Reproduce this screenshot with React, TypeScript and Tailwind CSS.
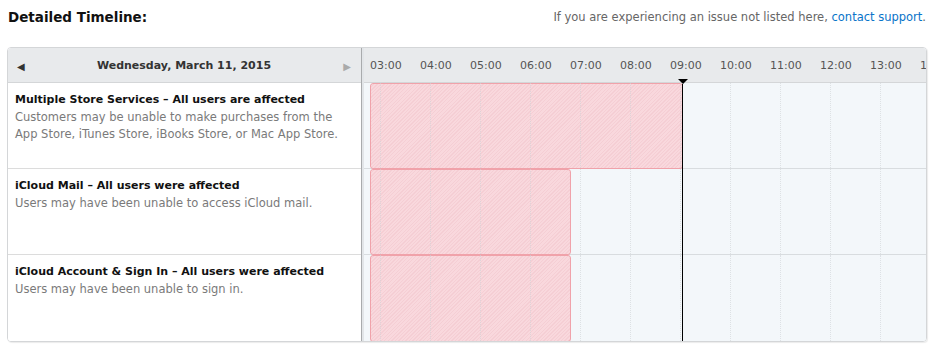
import React from "react";

const hours = ["03:00","04:00","05:00","06:00","07:00","08:00","09:00","10:00","11:00","12:00","13:00","14:00"];

const rows = [
  {
    title: "Multiple Store Services \u2013 All users are affected",
    desc: ["Customers may be unable to make purchases from the", "App Store, iTunes Store, iBooks Store, or Mac App Store."],
    start: 6,
    end: 318,
  },
  {
    title: "iCloud Mail \u2013 All users were affected",
    desc: ["Users may have been unable to access iCloud mail."],
    start: 6,
    end: 206,
  },
  {
    title: "iCloud Account & Sign In \u2013 All users were affected",
    desc: ["Users may have been unable to sign in."],
    start: 6,
    end: 206,
  },
];

const NOW = 318; // px offset inside timeline area

export default function App() {
  return (
    <div className="w-[937px] h-[352px] bg-white overflow-hidden font-['DejaVu_Sans',sans-serif]">
      <div className="flex items-end justify-between pl-[8px] pr-[11px] h-[26px]">
        <div className="text-[13.5px] font-bold text-[#111] leading-[18px]">Detailed Timeline:</div>
        <div className="text-[11.5px] text-[#666] leading-[16px] mb-[1px]">
          If you are experiencing an issue not listed here, <span className="text-[#0a74c9]">contact support</span>.
        </div>
      </div>
      <div className="ml-[7px] mt-[21px] w-[920px] h-[295px] border border-[#d4d6d8] rounded-[4px] flex overflow-hidden shadow-[1px_1px_1px_rgba(0,0,0,0.08)]">
        {/* left column */}
        <div className="w-[354px] shrink-0 flex flex-col border-r border-[#a9abad] bg-white">
          <div className="h-[35px] bg-[#e8eaec] flex items-center justify-between pl-[9px] pr-[10px] pt-[2px] border-b border-[#d4d6d8]">
            <span className="text-[10px] text-[#333]">◀</span>
            <span className="text-[11px] font-bold text-[#333] whitespace-nowrap">Wednesday, March 11, 2015</span>
            <span className="text-[10px] text-[#aaa]">▶</span>
          </div>
          {rows.map((r, i) => (
            <div key={i} className={"h-[86px] px-[7px] pt-[8px] whitespace-nowrap " + (i < 2 ? "border-b border-[#dcdcdc]" : "")}>
              <div className="text-[11px] font-bold text-[#111] leading-[17px]">{r.title}</div>
              <div className="mt-[1px]">
                {r.desc.map((d, j) => (
                  <div key={j} className="text-[11.5px] text-[#7a7a7a] leading-[17px]">{d}</div>
                ))}
              </div>
            </div>
          ))}
        </div>
        {/* timeline */}
        <div className="flex-1 min-w-0 relative flex flex-col bg-[#f3f7fa] border-l-2 border-[#e2e5e8] overflow-hidden">
          <div className="h-[35px] shrink-0 bg-[#e8eaec] border-b border-[#d4d6d8] flex items-center pl-[6px] pt-[3px] whitespace-nowrap">
            {hours.map((h) => (
              <span key={h} className="w-[50px] shrink-0 text-[11px] text-[#555]">{h}</span>
            ))}
          </div>
          {rows.map((r, i) => (
            <div key={i} className={"h-[86px] shrink-0 relative " + (i < 2 ? "border-b border-[#d8dcdf]" : "")}>
              <div
                className="absolute top-0 bottom-[-1px] border border-[#f0a2aa] rounded-[3px] bg-[repeating-linear-gradient(135deg,#f9d8dd_0px,#f9d8dd_1.5px,#f5ced4_1.5px,#f5ced4_2.5px)]"
                style={{ left: r.start, width: r.end - r.start + 1 }}
              />
              {hours.map((h, k) => (
                <div
                  key={h}
                  className="absolute top-0 bottom-0 w-0 border-l border-dotted border-[#cfd3d7] opacity-60"
                  style={{ left: 16 + k * 50 }}
                />
              ))}
            </div>
          ))}
          {/* now line */}
          <div className="absolute top-[36px] bottom-0 w-[1px] bg-black" style={{ left: NOW }} />
          <div
            className="absolute top-[31px] w-0 h-0 border-l-[5px] border-r-[5px] border-t-[5px] border-l-transparent border-r-transparent border-t-black"
            style={{ left: NOW - 4 }}
          />
        </div>
      </div>
    </div>
  );
}
